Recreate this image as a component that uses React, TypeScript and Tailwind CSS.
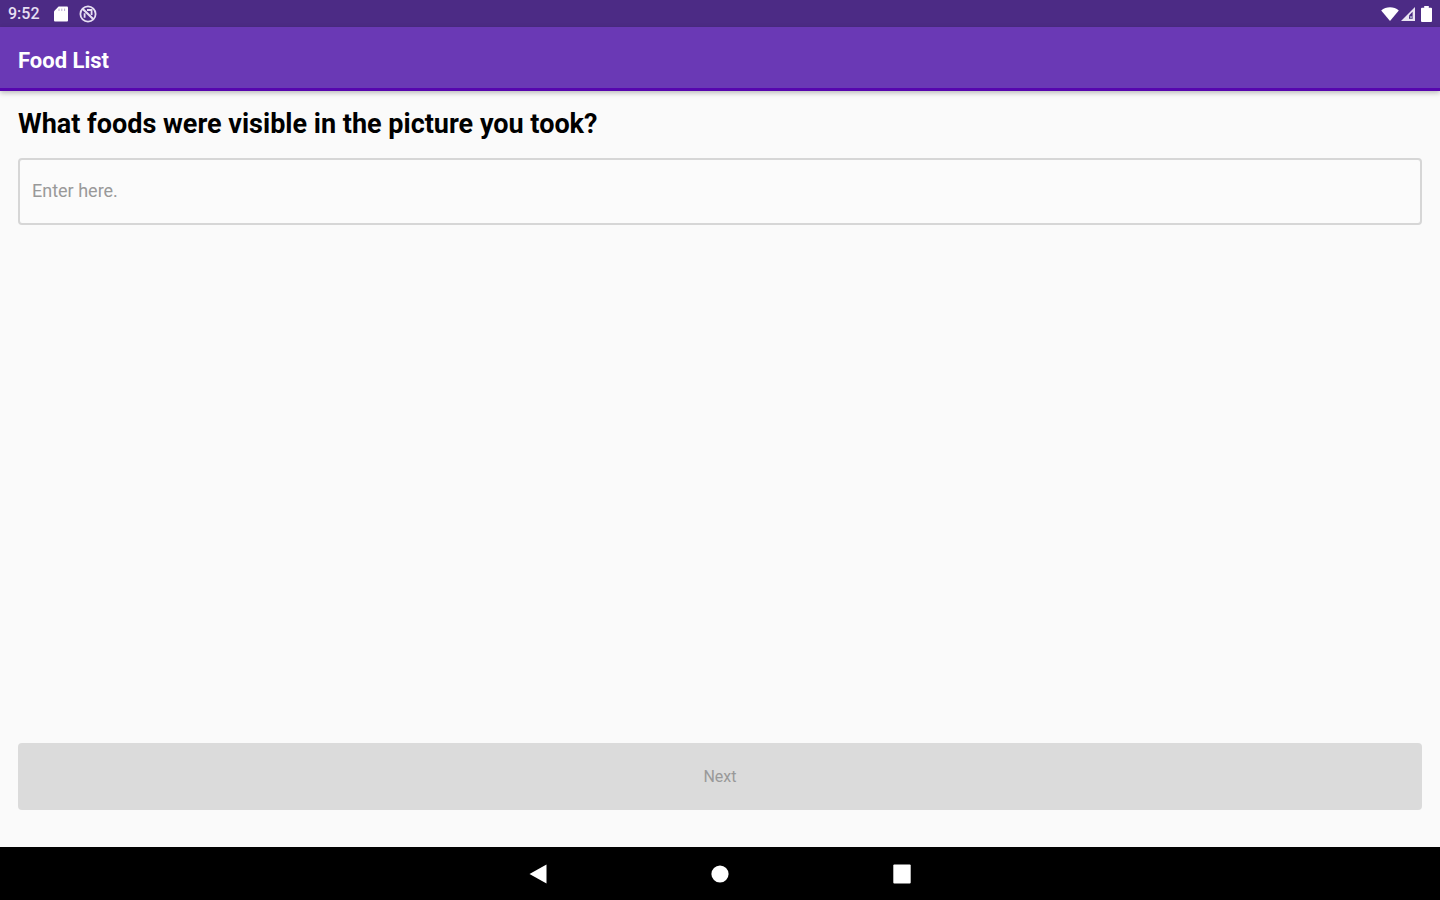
import { useState } from 'react'

const SdCardIcon = () => (
  <svg viewBox="0 0 14 16" className="h-4 w-3.5 fill-white">
    <path d="M4.6 0.5H13a1 1 0 0 1 1 1v13a1 1 0 0 1-1 1H1a1 1 0 0 1-1-1V5.2z" />
    <path d="M5 2.6v2.4M7.8 2.6v2.4M10.6 2.6v2.4" className="stroke-[#b9aad2]" />
  </svg>
)

const DataSaverIcon = () => (
  <svg viewBox="0 0 18 18" className="size-[18px] fill-none stroke-[#e6dff2]">
    <circle cx="9" cy="9" r="7.6" strokeWidth="1.8" />
    <path d="M3.8 4l10.4 10" strokeWidth="2.2" />
    <path d="M5.6 12.8V8.2M8 5h4.6v5" strokeWidth="1.8" />
  </svg>
)

const WifiIcon = () => (
  <svg viewBox="0 0 18 14" className="h-3.5 w-[18px] fill-white">
    <path d="M9 14L0.2 3.4C2.6 1.2 5.8 0.2 9 0.2s6.4 1 8.8 3.2z" />
  </svg>
)

const SignalIcon = () => (
  <svg viewBox="0 0 14 14" className="h-3.5 w-3.5">
    <path d="M0 14L14 0v14z" className="fill-[#e9e4f2]" />
    <path d="M8 12V8.4l3.6-3.6V12z" className="fill-[#4b2b85]" />
    <path d="M9 9.2l2 2.4M11 9.2l-2 2.4" className="stroke-[#b9c6d8]" />
  </svg>
)

const BatteryIcon = () => (
  <svg viewBox="0 0 11 16" className="h-4 w-[11px] fill-white">
    <path d="M3.2 0h4.6v1.8H10a1 1 0 0 1 1 1V15a1 1 0 0 1-1 1H1a1 1 0 0 1-1-1V2.8a1 1 0 0 1 1-1h2.2z" />
  </svg>
)

const StatusBar = () => (
  <div className="flex h-[27px] items-center justify-between bg-[#4c2b85] pr-2 pl-2 text-white">
    <div className="flex items-center">
      <span className="w-[46px] text-base font-medium text-[#e6dff2]">9:52</span>
      <SdCardIcon />
      <span className="ml-[11px]">
        <DataSaverIcon />
      </span>
    </div>
    <div className="flex items-center">
      <WifiIcon />
      <span className="mr-1.5 ml-0.5">
        <SignalIcon />
      </span>
      <BatteryIcon />
    </div>
  </div>
)

const NavBar = () => (
  <nav className="flex h-[53px] items-center justify-center gap-[142px] bg-black">
    <button aria-label="Back" className="flex h-10 w-10 items-center justify-center">
      <svg viewBox="0 0 18 20" className="h-5 w-[18px] fill-white">
        <path d="M0.5 10L17.5 0.5v19z" />
      </svg>
    </button>
    <button aria-label="Home" className="flex h-10 w-10 items-center justify-center">
      <svg viewBox="0 0 18 18" className="size-[18px] fill-white">
        <circle cx="9" cy="9" r="8.6" />
      </svg>
    </button>
    <button aria-label="Overview" className="flex h-10 w-10 items-center justify-center">
      <svg viewBox="0 0 18 20" className="h-5 w-[18px] fill-white">
        <rect x="0.3" y="0.6" width="17.4" height="18.8" rx="1" />
      </svg>
    </button>
  </nav>
)

const App = () => {
  const [foods, setFoods] = useState('')

  return (
    <div className="flex min-h-screen flex-col bg-[#fafafa] font-[Roboto,sans-serif]">
      <StatusBar />
      {/* app bar */}
      <header className="z-10 flex h-16 items-center border-b-3 border-[#5706ae] bg-[#6a39b5] px-[18px] pt-1.5 shadow-[0_2px_5px_rgba(0,0,0,0.25)]">
        <h1 className="text-[22px] font-bold text-white">Food List</h1>
      </header>
      <main className="flex flex-1 flex-col px-[18px] pt-[15px] pb-[37px]">
        <label htmlFor="foods" className="text-[27px] leading-9 font-bold text-black">
          What foods were visible in the picture you took?
        </label>
        <input
          id="foods"
          type="text"
          value={foods}
          onChange={(e) => setFoods(e.target.value)}
          placeholder="Enter here."
          className="mt-4 h-[67px] rounded-sm border-2 border-[#d6d6d6] bg-[#fbfbfb] px-3 pb-0.5 text-lg text-black outline-none placeholder:text-[#999999]"
        />
        {/* stays grey until something is entered */}
        <button
          disabled={!foods}
          className="mt-auto h-[67px] rounded-sm bg-[#6a39b5] text-base text-white disabled:bg-[#dbdbdb] disabled:text-[#999999]"
        >
          Next
        </button>
      </main>
      <NavBar />
    </div>
  )
}

export default App
